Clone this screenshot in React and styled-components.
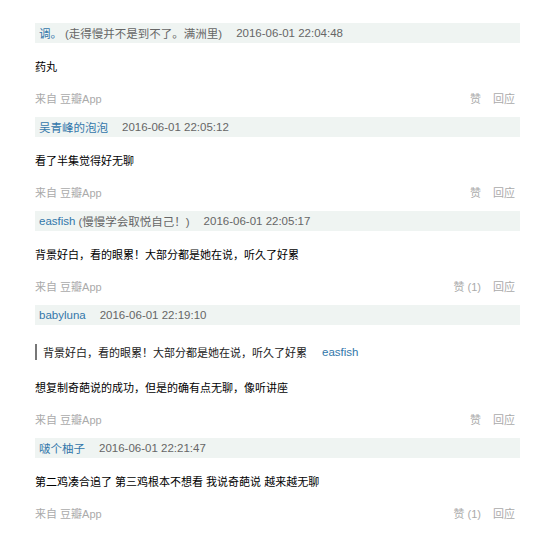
import React from 'react';
import styled, { createGlobalStyle } from 'styled-components';

const GlobalStyle = createGlobalStyle`
    body {
        margin: 0;
        background: #fff;
        font-family: "Liberation Sans", Arial, "Noto Sans CJK SC", sans-serif;
    }
`;

const List = styled.div`
    display: flex;
    flex-direction: column;
    width: 485px;
    padding: 23px 0 0 35px;
`;

const Comment = styled.div`
    display: flex;
    flex-direction: column;
    margin-bottom: 9.5px;
`;

const Header = styled.div`
    display: flex;
    align-items: center;
    height: 20px;
    padding-left: 4px;
    background: #eff4f2;
    font-size: 11.5px;
`;

const Author = styled.span`
    color: #37a;
`;

const Sign = styled.span`
    color: #666;
    margin-left: 3px;
`;

const Time = styled.span`
    color: #666;
    margin-left: 14px;
`;

const Quote = styled.div`
    display: flex;
    align-items: center;
    margin-top: 17px;
    height: 20px;
    font-size: 11px;
    color: #222;
`;

const QuoteBar = styled.span`
    width: 2px;
    height: 16px;
    background: #777;
    margin-right: 6px;
`;

const QuoteAuthor = styled.span`
    color: #37a;
    margin-left: 15px;
    font-size: 11.5px;
`;

const Content = styled.div`
    margin-top: ${({ quoted }) => (quoted ? '16px' : '14px')};
    line-height: 20px;
    font-size: 11px;
    color: #000;
`;

const Footer = styled.div`
    display: flex;
    justify-content: space-between;
    align-items: center;
    margin-top: 10.5px;
    height: 20px;
    padding-right: 5px;
    font-size: 11px;
    color: #aaa;
`;

const Actions = styled.div`
    display: flex;
    gap: 12px;
`;

const comments = [
    { author: '调。', sign: '(走得慢并不是到不了。满洲里)', time: '2016-06-01 22:04:48', text: '药丸', likes: 0 },
    { author: '吴青峰的泡泡', time: '2016-06-01 22:05:12', text: '看了半集觉得好无聊', likes: 0 },
    { author: 'easfish', sign: '(慢慢学会取悦自己！)', time: '2016-06-01 22:05:17', text: '背景好白，看的眼累！大部分都是她在说，听久了好累', likes: 1 },
    {
        author: 'babyluna',
        time: '2016-06-01 22:19:10',
        quote: { text: '背景好白，看的眼累！大部分都是她在说，听久了好累', author: 'easfish' },
        text: '想复制奇葩说的成功，但是的确有点无聊，像听讲座',
        likes: 0,
    },
    { author: '啵个柚子', time: '2016-06-01 22:21:47', text: '第二鸡凑合追了 第三鸡根本不想看 我说奇葩说 越来越无聊', likes: 1 },
];

const App = () => (
    <>
        <GlobalStyle />
        <List>
            {comments.map((c) => (
                <Comment key={c.time}>
                    <Header>
                        <Author>{c.author}</Author>
                        {c.sign && <Sign>{c.sign}</Sign>}
                        <Time>{c.time}</Time>
                    </Header>
                    {c.quote && (
                        <Quote>
                            <QuoteBar />
                            {c.quote.text}
                            <QuoteAuthor>{c.quote.author}</QuoteAuthor>
                        </Quote>
                    )}
                    <Content quoted={!!c.quote}>{c.text}</Content>
                    <Footer>
                        <span>来自 豆瓣App</span>
                        <Actions>
                            <span>{c.likes ? `赞 (${c.likes})` : '赞'}</span>
                            <span>回应</span>
                        </Actions>
                    </Footer>
                </Comment>
            ))}
        </List>
    </>
);

export default App;
